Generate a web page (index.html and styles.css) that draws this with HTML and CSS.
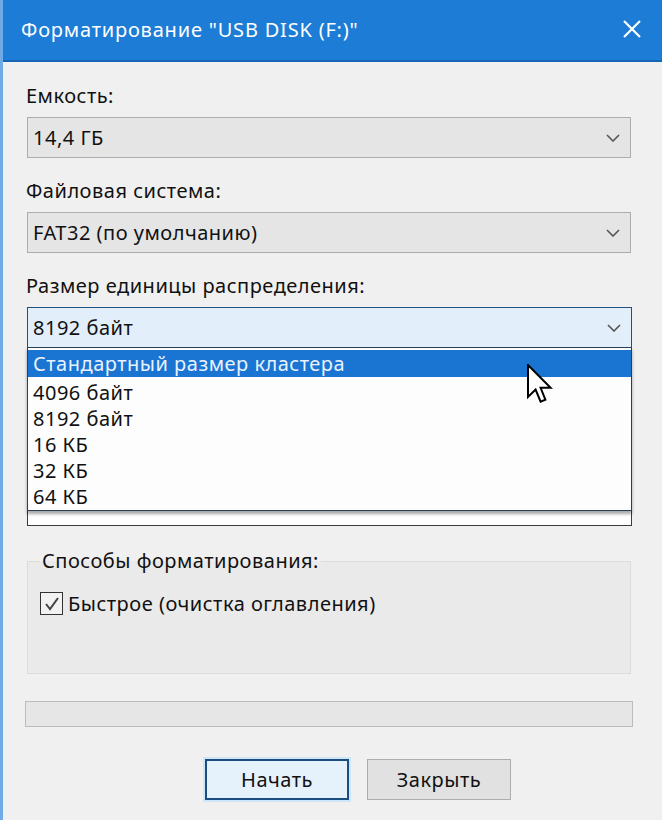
FILE: index.html
```html
<!DOCTYPE html>
<html lang="ru">
<head>
<meta charset="utf-8">
<title>Форматирование</title>
<link rel="stylesheet" href="styles.css">
</head>
<body>
<div class="window">
  <div class="titlebar">
    <span class="title">Форматирование "USB DISK (F:)"</span>
    <svg class="close" width="20" height="20" viewBox="0 0 20 20"><path d="M2 2 L18 18 M18 2 L2 18" stroke="#ffffff" stroke-width="2.2" fill="none"/></svg>
  </div>
  <div class="content">
    <div class="field">
      <div class="label">Емкость:</div>
      <div class="combo">
        <span class="value">14,4 ГБ</span>
        <svg class="chev" width="14" height="8" viewBox="0 0 14 8"><path d="M1 1 L7 7 L13 1" stroke="#555" stroke-width="1.6" fill="none"/></svg>
      </div>
    </div>
    <div class="field">
      <div class="label">Файловая система:</div>
      <div class="combo">
        <span class="value">FAT32 (по умолчанию)</span>
        <svg class="chev" width="14" height="8" viewBox="0 0 14 8"><path d="M1 1 L7 7 L13 1" stroke="#555" stroke-width="1.6" fill="none"/></svg>
      </div>
    </div>
    <div class="field">
      <div class="label">Размер единицы распределения:</div>
      <div class="combo-wrap">
        <div class="combo focused">
          <span class="value">8192 байт</span>
          <svg class="chev" width="14" height="8" viewBox="0 0 14 8"><path d="M1 1 L7 7 L13 1" stroke="#555" stroke-width="1.6" fill="none"/></svg>
        </div>
        <ul class="dropdown">
          <li class="selected">Стандартный размер кластера</li>
          <li>4096 байт</li>
          <li>8192 байт</li>
          <li>16 КБ</li>
          <li>32 КБ</li>
          <li>64 КБ</li>
        </ul>
      </div>
    </div>
    <div class="volume">
      <div class="textbox"></div>
    </div>
    <fieldset class="group">
      <legend>Способы форматирования:</legend>
      <label class="check">
        <span class="box"><svg width="18" height="18" viewBox="0 0 18 18"><path d="M3 9 L7 14 L15 3" stroke="#444" stroke-width="2" fill="none"/></svg></span>
        <span>Быстрое (очистка оглавления)</span>
      </label>
    </fieldset>
    <div class="progress"></div>
    <div class="buttons">
      <div class="btn primary">Начать</div>
      <div class="btn">Закрыть</div>
    </div>
  </div>
  <svg class="cursor" width="26" height="40" viewBox="0 0 13 20"><path d="M0.5 0.5 L0.5 16.5 L4.3 12.8 L6.8 18.8 L9.2 17.8 L6.8 11.9 L11.8 11.9 Z" fill="#ffffff" stroke="#000000" stroke-width="1" stroke-linejoin="miter"/></svg>
</div>
</body>
</html>
```
FILE: styles.css
```css
* { box-sizing: border-box; }
html, body { margin: 0; padding: 0; }
body {
  background: #f0f0f0;
  font-family: "Noto Sans", "Open Sans", sans-serif;
  font-size: 20px;
  letter-spacing: 0.5px;
  color: #111;
}
.window {
  position: relative;
  width: 662px;
  height: 820px;
  background: #f0f0f0;
  border-left: 3px solid #6fabe4;
  overflow: hidden;
}
.titlebar {
  height: 62px;
  margin-left: -3px;
  background: #1c7cd6;
  border-bottom: 2px solid #1565b5;
  display: flex;
  align-items: center;
  justify-content: space-between;
  padding: 0 20px 2px 21px;
}
.title {
  color: #ffffff;
  font-size: 20px;
  letter-spacing: 0.8px;
}
.close { display: block; }
.content {
  padding: 22px 30px 0 23px;
  display: flex;
  flex-direction: column;
}
.field {
  display: flex;
  flex-direction: column;
  gap: 9px;
  margin-bottom: 21px;
}
.label {
  height: 24px;
  line-height: 24px;
}
.combo {
  height: 41px;
  background: #e5e5e5;
  border: 1px solid #adadad;
  margin-left: 1px;
  margin-right: 1px;
  display: flex;
  align-items: center;
  justify-content: space-between;
  padding: 0 10px 0 5px;
}
.combo-wrap { position: relative; margin-left: 1px; }
.combo.focused {
  height: 41px;
  margin: 0;
  background: #e2eef9;
  border: 1px solid #23507f;
}
.chev { display: block; }
.dropdown {
  position: absolute;
  left: 0;
  right: 0;
  top: 40px;
  margin: 0;
  padding: 2px 0 0 0;
  list-style: none;
  background: #fdfdfd;
  border: 1px solid #2a3e55;
  box-shadow: 0 3px 3px rgba(0,0,0,0.35);
  z-index: 2;
}
.dropdown li {
  height: 26px;
  line-height: 26px;
  padding-left: 5px;
}
.dropdown li.selected {
  height: 27px;
  line-height: 27px;
  margin-bottom: 3px;
  background: #1a74d2;
  color: #e8f2ff;
}
.volume {
  margin: 117px 0 0 1px;
}
.textbox {
  height: 40px;
  background: #ffffff;
  border: 1px solid #3a3a3a;
}
.group {
  margin: 23px 1px 0 1px;
  padding: 17px 12px 0 12px;
  height: 125px;
  border: 1px solid #dcdcdc;
  background: #eaeaea;
}
.group legend {
  padding: 0 2px;
  margin-left: 0;
  line-height: 24px;
}
.check {
  display: flex;
  align-items: center;
  gap: 5px;
}
.box {
  width: 23px;
  height: 23px;
  border: 1px solid #333;
  background: #f2f2f2;
  display: flex;
  align-items: center;
  justify-content: center;
}
.progress {
  margin: 27px -1px 0 -1px;
  height: 26px;
  background: #e6e6e6;
  border: 1px solid #bcbcbc;
}
.buttons {
  display: flex;
  gap: 18px;
  margin-top: 32px;
  padding-left: 179px;
}
.btn {
  width: 144px;
  height: 41px;
  display: flex;
  align-items: center;
  justify-content: center;
  background: #e1e1e1;
  border: 1px solid #adadad;
  font-size: 20px;
}
.primary {
  background: #e5f1fb;
  border: 2px solid #1b4d80;
  box-shadow: 0 0 0 2px #cfe6f8;
}
.cursor {
  position: absolute;
  left: 524px;
  top: 364px;
  z-index: 3;
}
```
